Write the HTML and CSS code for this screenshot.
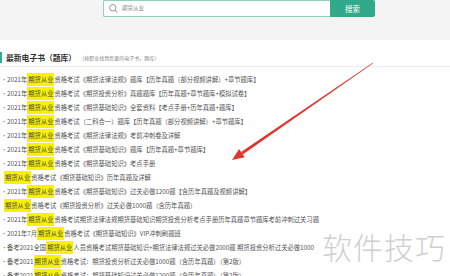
FILE: index.html
```html
<!DOCTYPE html>
<html lang="zh-CN">
<head>
<meta charset="utf-8">
<link rel="stylesheet" href="styles.css">
</head>
<body>
<div class="page">
  <div class="top">
    <div class="search">
      <div class="search-box">
        <svg class="search-icon" width="9" height="10" viewBox="0 0 9 10"><circle cx="3.8" cy="3.8" r="3.2" fill="none" stroke="#8a8a8a" stroke-width="0.9"/><line x1="6.1" y1="6.2" x2="8.4" y2="8.9" stroke="#8a8a8a" stroke-width="1"/></svg>
        <span class="placeholder">期货从业</span>
      </div>
      <div class="search-btn">搜索</div>
    </div>
  </div>
  <div class="section">
    <div class="section-head">
      <span class="bar"></span>
      <span class="title">最新电子书（题库）</span>
      <span class="sub">（按职业找到您要的电子书，题库）</span>
    </div>
    <ul class="list">
      <li><span class="dot">·</span>2021年<em>期货从业</em>资格考试《期货法律法规》题库【历年真题（部分视频讲解）+章节题库】</li>
      <li><span class="dot">·</span>2021年<em>期货从业</em>资格考试《期货投资分析》真题题库【历年真题+章节题库+模拟试卷】</li>
      <li><span class="dot">·</span>2021年<em>期货从业</em>资格考试《期货基础知识》全套资料【考点手册+历年真题+题库】</li>
      <li><span class="dot">·</span>2021年<em>期货从业</em>资格考试（二科合一）题库【历年真题（部分视频讲解）+章节题库】</li>
      <li><span class="dot">·</span>2021年<em>期货从业</em>资格考试《期货法律法规》考前冲刺卷及详解</li>
      <li><span class="dot">·</span>2021年<em>期货从业</em>资格考试《期货基础知识》题库【历年真题+章节题库】</li>
      <li><span class="dot">·</span>2021年<em>期货从业</em>资格考试《期货基础知识》考点手册</li>
      <li class="lead"><em>期货从业</em>资格考试《期货基础知识》历年真题及详解</li>
      <li><span class="dot">·</span>2021年<em>期货从业</em>资格考试《期货基础知识》过关必做1200题【含历年真题及视频讲解】</li>
      <li class="lead"><em>期货从业</em>资格考试《期货投资分析》过关必做1000题（含历年真题）</li>
      <li><span class="dot">·</span>2021年<em>期货从业</em>资格考试期货法律法规期货基础知识期货投资分析考点手册历年真题章节题库考前冲刺过关习题</li>
      <li><span class="dot">·</span>2021年7月<em>期货从业</em>资格考试《期货基础知识》VIP冲刺刷题班</li>
      <li><span class="dot">·</span>备考2021全国<em>期货从业</em>人员资格考试期货基础知识+期货法律法规过关必做2000题 期货投资分析过关必做1000</li>
      <li><span class="dot">·</span>备考2021<em>期货从业</em>资格考试：期货投资分析过关必做1000题（含历年真题）（第2版）</li>
      <li><span class="dot">·</span>备考2021<em>期货从业</em>资格考试：期货基础知识过关必做1200题（含历年真题）（第2版）</li>
    </ul>
  </div>
  <svg class="arrow" width="450" height="276" viewBox="0 0 450 276">
    <polygon points="373.2,63.3 372.8,62.7 241.1,152.0 242.7,154.4" fill="#e0362c"/>
    <polygon points="232,160 239.1,149.1 244.7,157.3" fill="#e0362c"/>
  </svg>
  <div class="watermark">软件技巧</div>
</div>
</body>
</html>
```
FILE: styles.css
```css
* { box-sizing: border-box; }
html, body { margin: 0; padding: 0; background: #fff; }
body {
  font-family: "Noto Sans CJK SC", "Noto Sans", sans-serif;
  color: #555;
  overflow: hidden;
}
.page { position: relative; width: 450px; height: 276px; overflow: hidden; }

.top {
  height: 40px;
  background: #f4f4f4;
  padding-left: 103px;
}
.search { display: flex; height: 17px; }
.search-box {
  width: 227px;
  height: 17px;
  background: #fff;
  border: 1px solid #8fcfbd;
  border-right: none;
  border-radius: 2px 0 0 2px;
  display: flex;
  align-items: center;
  padding-left: 5px;
}
.search-icon { display: block; margin-right: 4px; }
.placeholder { font-size: 5.5px; color: #888; line-height: 1; }
.search-btn {
  width: 45px;
  height: 17px;
  background: #33a98b;
  color: #fff;
  font-size: 7.5px;
  display: flex;
  align-items: center;
  justify-content: center;
  border-radius: 0 2px 2px 0;
}

.section-head {
  margin-top: 12px;
  height: 15px;
  border-bottom: 1px solid #ececec;
  display: flex;
  align-items: flex-start;
}
.bar {
  width: 2px;
  height: 11px;
  background: #35a98d;
  margin-right: 4px;
}
.title {
  font-size: 7.8px;
  line-height: 11px;
  font-weight: 700;
  color: #333;
}
.sub {
  font-size: 5px;
  line-height: 11px;
  color: #888;
  margin-left: 3px;
}

.list {
  list-style: none;
  margin: 0;
  padding: 6px 0 0 0;
}
.list li {
  height: 14px;
  line-height: 14px;
  font-size: 6.3px;
  white-space: nowrap;
  color: #555;
}
.list li.lead { padding-left: 4px; }
.dot { display: inline-block; width: 7px; padding-left: 1px; color: #888; }
.list em {
  font-style: normal;
  background: #f8f200;
  color: #444;
  padding: 2px 1px;
}

.arrow { position: absolute; left: 0; top: 0; pointer-events: none; }
.watermark {
  position: absolute;
  left: 322px;
  top: 226px;
  font-size: 30px;
  line-height: 40px;
  color: #cfcfcf;
  font-weight: 300;
  letter-spacing: 1px;
}
```
